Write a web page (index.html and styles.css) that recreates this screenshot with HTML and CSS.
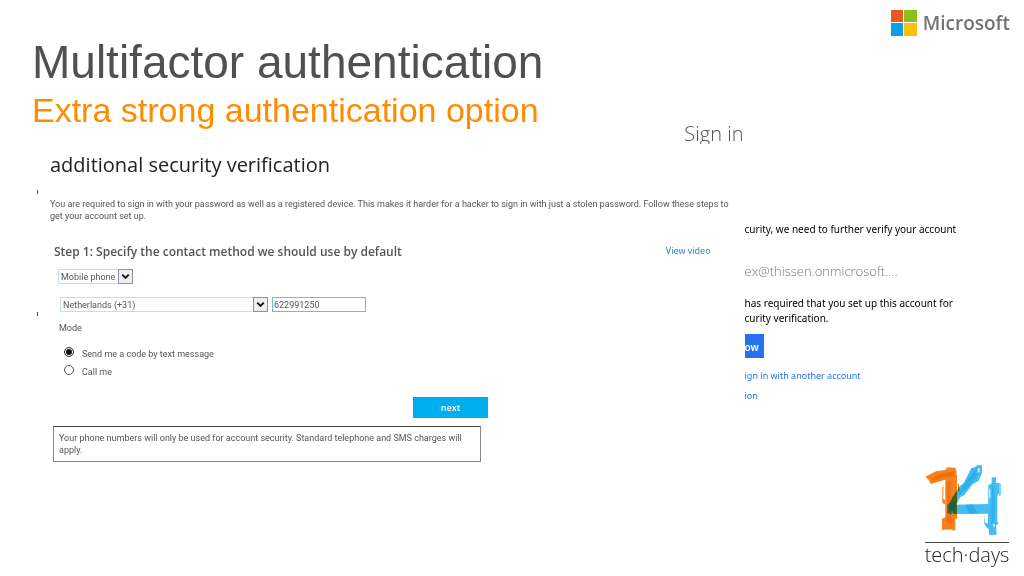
FILE: index.html
```html
<!DOCTYPE html>
<html lang="en">
<head>
    <meta charset="UTF-8">
    <meta name="viewport" content="width=device-width, initial-scale=1">
    <title>Multifactor authentication</title>
    <link rel="stylesheet" href="styles.css">
</head>
<body>
<div class="slide">
    <header class="slide-header">
        <h1 class="slide-title">Multifactor authentication</h1>
        <div class="microsoft-logo">
            <svg width="26" height="26" viewBox="0 0 26 26" aria-hidden="true">
                <rect width="12" height="12" fill="#eb5a1c"/>
                <rect x="13" width="13" height="12" fill="#8cbf1c"/>
                <rect y="13" width="12" height="13" fill="#0a9fe6"/>
                <rect x="13" y="13" width="13" height="13" fill="#fdbf0a"/>
            </svg>
            <span>Microsoft</span>
        </div>
    </header>

    <div class="sub-header">
        <h2 class="slide-subtitle">Extra strong authentication option</h2>
        <span class="signin-title">Sign in</span>
    </div>

    <main class="screens">
        <div class="bullets">
            <span class="bullet"></span>
            <span class="bullet"></span>
        </div>

        <form class="verification">
            <h3 class="verification-title">additional security verification</h3>
            <p class="verification-intro">You are required to sign in with your password as well as a registered device. This makes it harder for a hacker to sign in with just a stolen password. Follow these steps to get your account set up.</p>

            <div class="step-row">
                <h4 class="step-title">Step 1: Specify the contact method we should use by default</h4>
                <a href="#" class="video-link">View video</a>
            </div>

            <div class="fields">
                <div class="select-box method">
                    <select aria-label="Contact method">
                        <option>Mobile phone</option>
                    </select>
                    <svg class="arrow" viewBox="0 0 14 14" aria-hidden="true"><path d="M3.500 5 7 8.500 10.500 5"/></svg>
                </div>
                <div class="phone-row">
                    <div class="select-box country">
                        <select aria-label="Country">
                            <option>Netherlands (+31)</option>
                        </select>
                        <svg class="arrow" viewBox="0 0 14 14" aria-hidden="true"><path d="M3.500 5 7 8.500 10.500 5"/></svg>
                    </div>
                    <input type="text" class="phone" value="622991250" aria-label="Phone number">
                </div>
                <fieldset class="mode">
                    <legend>Mode</legend>
                    <label><input type="radio" name="mode" checked>Send me a code by text message</label>
                    <label><input type="radio" name="mode">Call me</label>
                </fieldset>
            </div>

            <button type="button" class="next-button">next</button>
            <p class="notice">Your phone numbers will only be used for account security. Standard telephone and SMS charges will apply.</p>
        </form>

        <section class="signin">
            <p class="signin-text">curity, we need to further verify your account</p>
            <p class="signin-user">ex@thissen.onmicrosoft....</p>
            <p class="signin-text">has required that you set up this account for<br>curity verification.</p>
            <button type="button" class="setup-button">ow</button>
            <a href="#" class="signin-link">ign in with another account</a>
            <a href="#" class="signin-link">ion</a>
        </section>
    </main>

    <footer class="slide-footer">
        <div class="techdays">
            <svg class="techdays-mark" viewBox="42 25 258 225" aria-hidden="true">
                <g fill="#f7821c">
                    <path d="M46 66 78 50 108 45 110 38 136 39 140 52 138 74 110 74 62 88 56 76z"/>
                    <path d="M106 60H141V190L136 194V228L120 224 96 226V192L106 188z"/>
                    <path d="M97 95H100V132L105 137V149L97 145zM144 86 148 90V110H144z"/>
                </g>
                <g fill="#e9610c">
                    <path d="M64 74 88 58 134 50 132 64 96 69 70 79z" opacity=".6"/>
                    <path d="M112 80H122V188L132 198 120 210 106 196 111 188z" opacity=".5"/>
                </g>
                <g fill="#45bdf3" class="blend">
                    <path d="M184 40 198 36 202 31 216 32V54L206 78 186 90 164 120 150 128 132 164 118 172V148L128 126 150 94 162 84z"/>
                    <path d="M128 150 240 148V177L130 178z"/>
                    <path d="M245 68H258V85H267V116L262 124V200L265 206 258 214 260 240 238 242 236 224 226 214V206H234L235 92 245 86z"/>
                    <path d="M268 84 272 87V121L268 125zM222 180 225 200 229 212 223 209z"/>
                </g>
                <g fill="#0f9fe2">
                    <path d="M170 76 200 40 206 58 174 98 148 122 143 118z" opacity=".45"/>
                    <path d="M166 150 188 149 202 176 179 177z" opacity=".5"/>
                    <path d="M246 90 252 104 254 198 244 208z" opacity=".45"/>
                </g>
                <path d="M112 150 126 138 138 146 134 168 122 180 112 174z" fill="#08634f" opacity=".75"/>
                <path d="M203 42 209 39V51L203 56zM237 100 241 106V134L237 126zM248 208 256 210 252 219z" fill="#fff" opacity=".8"/>
            </svg>
            <span class="techdays-name">tech·days</span>
        </div>
    </footer>
</div>
</body>
</html>
```

FILE: styles.css
```css
* {
    box-sizing: border-box;
}

body {
    margin: 0;
    background: #fff;
    color: #555;
    font-family: "Open Sans", sans-serif;
    font-size: 9px;
    line-height: 12px;
}

h1, h2, h3, h4, p {
    margin: 0;
    font-weight: normal;
}

a {
    text-decoration: none;
}

.slide {
    display: flex;
    flex-direction: column;
    min-height: 100vh;
    overflow: hidden;
}

.slide-header {
    display: flex;
    justify-content: space-between;
    padding: 10px 14px 0 32px;
}

.slide-title {
    padding-top: 26px;
    color: #505050;
    font-family: "Liberation Sans", Arial, sans-serif;
    font-size: 46px;
    line-height: 52px;
}

.microsoft-logo {
    display: flex;
    gap: 6px;
    height: 26px;
    color: #737373;
    font-size: 19px;
    font-weight: 600;
    line-height: 26px;
}

.sub-header {
    display: flex;
    justify-content: space-between;
    align-items: flex-end;
    width: 73%;
    height: 56px;
    padding: 0 4px 0 32px;
}

.slide-subtitle {
    align-self: flex-start;
    color: #ff8c00;
    font-family: "Liberation Sans", Arial, sans-serif;
    font-size: 34px;
    line-height: 44px;
}

.signin-title {
    height: 22px;
    overflow: hidden;
    font-size: 20px;
    font-weight: 300;
    line-height: 24px;
}

.screens {
    display: flex;
}

.bullets {
    display: flex;
    flex-direction: column;
    gap: 118px;
    width: 38px;
    padding: 46px 0 0 37px;
}

.bullet {
    width: 1px;
    height: 4px;
    background: #505050;
}

.verification {
    flex: 0 0 69%;
    display: flex;
    flex-direction: column;
    padding: 8px 4px 0 12px;
    font-family: Roboto, sans-serif;
}

.verification-title {
    color: #222;
    font-family: "Open Sans", sans-serif;
    font-size: 20px;
    line-height: 26px;
}

.verification-intro {
    padding-top: 20px;
}

.step-row {
    display: flex;
    justify-content: space-between;
    align-items: flex-start;
    padding: 23px 30px 0 4px;
    font-family: "Open Sans", sans-serif;
    line-height: 14px;
}

.step-title {
    font-size: 12px;
    font-weight: 600;
}

.video-link {
    color: #1a7fc0;
    line-height: 12px;
}

.fields {
    display: flex;
    flex-direction: column;
    padding: 10px 0 0 8px;
}

.select-box {
    position: relative;
}

.select-box select,
.phone {
    width: 100%;
    height: 15px;
    padding: 0 2px;
    appearance: none;
    border: 1px solid #c3dcf0;
    border-radius: 0;
    background: #fff;
    color: #555;
    font: inherit;
}

.arrow {
    position: absolute;
    top: 0;
    right: 0;
    width: 15px;
    height: 15px;
    border: 1px solid #8795a5;
    background: #eee;
    fill: none;
    stroke: #111;
    stroke-width: 2;
    pointer-events: none;
}

.method {
    width: 75px;
}

.phone-row {
    display: flex;
    gap: 4px;
    padding: 13px 0 0 2px;
}

.country {
    width: 208px;
}

.phone {
    width: 94px;
    padding: 0 1px;
    border-color: #8fb0cc;
}

.mode {
    display: flex;
    flex-direction: column;
    gap: 4px;
    margin: 0;
    padding: 13px 0 0 6px;
    border: 0;
}

.mode legend {
    padding: 10px 0 0;
    margin-left: -5px;
}

.mode label {
    display: flex;
    gap: 8px;
    line-height: 14px;
}

.mode input {
    width: 10px;
    height: 10px;
    margin: 0;
    appearance: none;
    border: 1px solid #555;
    border-radius: 50%;
    background: #fff;
}

.mode input:checked {
    border-color: #444;
    background: #111;
    box-shadow: inset 0 0 0 1px #fff;
}

.next-button {
    width: 75px;
    height: 21px;
    margin: 18px 0 0 363px;
    border: 0;
    background: #00adef;
    color: #fff;
    font-family: "Open Sans", sans-serif;
    font-size: 9px;
    font-weight: 600;
}

.notice {
    width: 428px;
    margin: 8px 0 0 3px;
    padding: 5px 5px;
    border: 1px solid #888;
    border-top-color: #444;
}

.signin {
    flex: 1;
    display: flex;
    flex-direction: column;
    align-items: flex-start;
    padding-top: 78px;
    overflow: hidden;
    color: #000;
    font-family: "Noto Sans", sans-serif;
    white-space: nowrap;
}

.signin-text {
    font-size: 10px;
    line-height: 15px;
}

.signin-user {
    padding: 24px 0 15px;
    color: #777;
    font-family: "Open Sans", sans-serif;
    font-size: 13px;
    font-weight: 300;
    line-height: 20px;
}

.setup-button {
    height: 24px;
    margin: 8px 0;
    padding: 2px 5px 0 0;
    border: 0;
    background: #2672ec;
    color: #fff;
    font: inherit;
    font-size: 10px;
    font-weight: 600;
}

.signin-link {
    color: #2672ec;
    line-height: 20px;
}

.slide-footer {
    display: flex;
    justify-content: flex-end;
    margin-top: auto;
    padding: 0 14px 9px 0;
}

.techdays {
    display: flex;
    flex-direction: column;
    align-items: center;
    width: 86px;
}

.techdays-mark {
    width: 86px;
    height: 75px;
    margin-bottom: 4px;
}

.blend {
    mix-blend-mode: multiply;
}

.techdays-name {
    border-top: 1px solid #444;
    color: #222;
    font-size: 20px;
    font-weight: 300;
    line-height: 24px;
}
```
